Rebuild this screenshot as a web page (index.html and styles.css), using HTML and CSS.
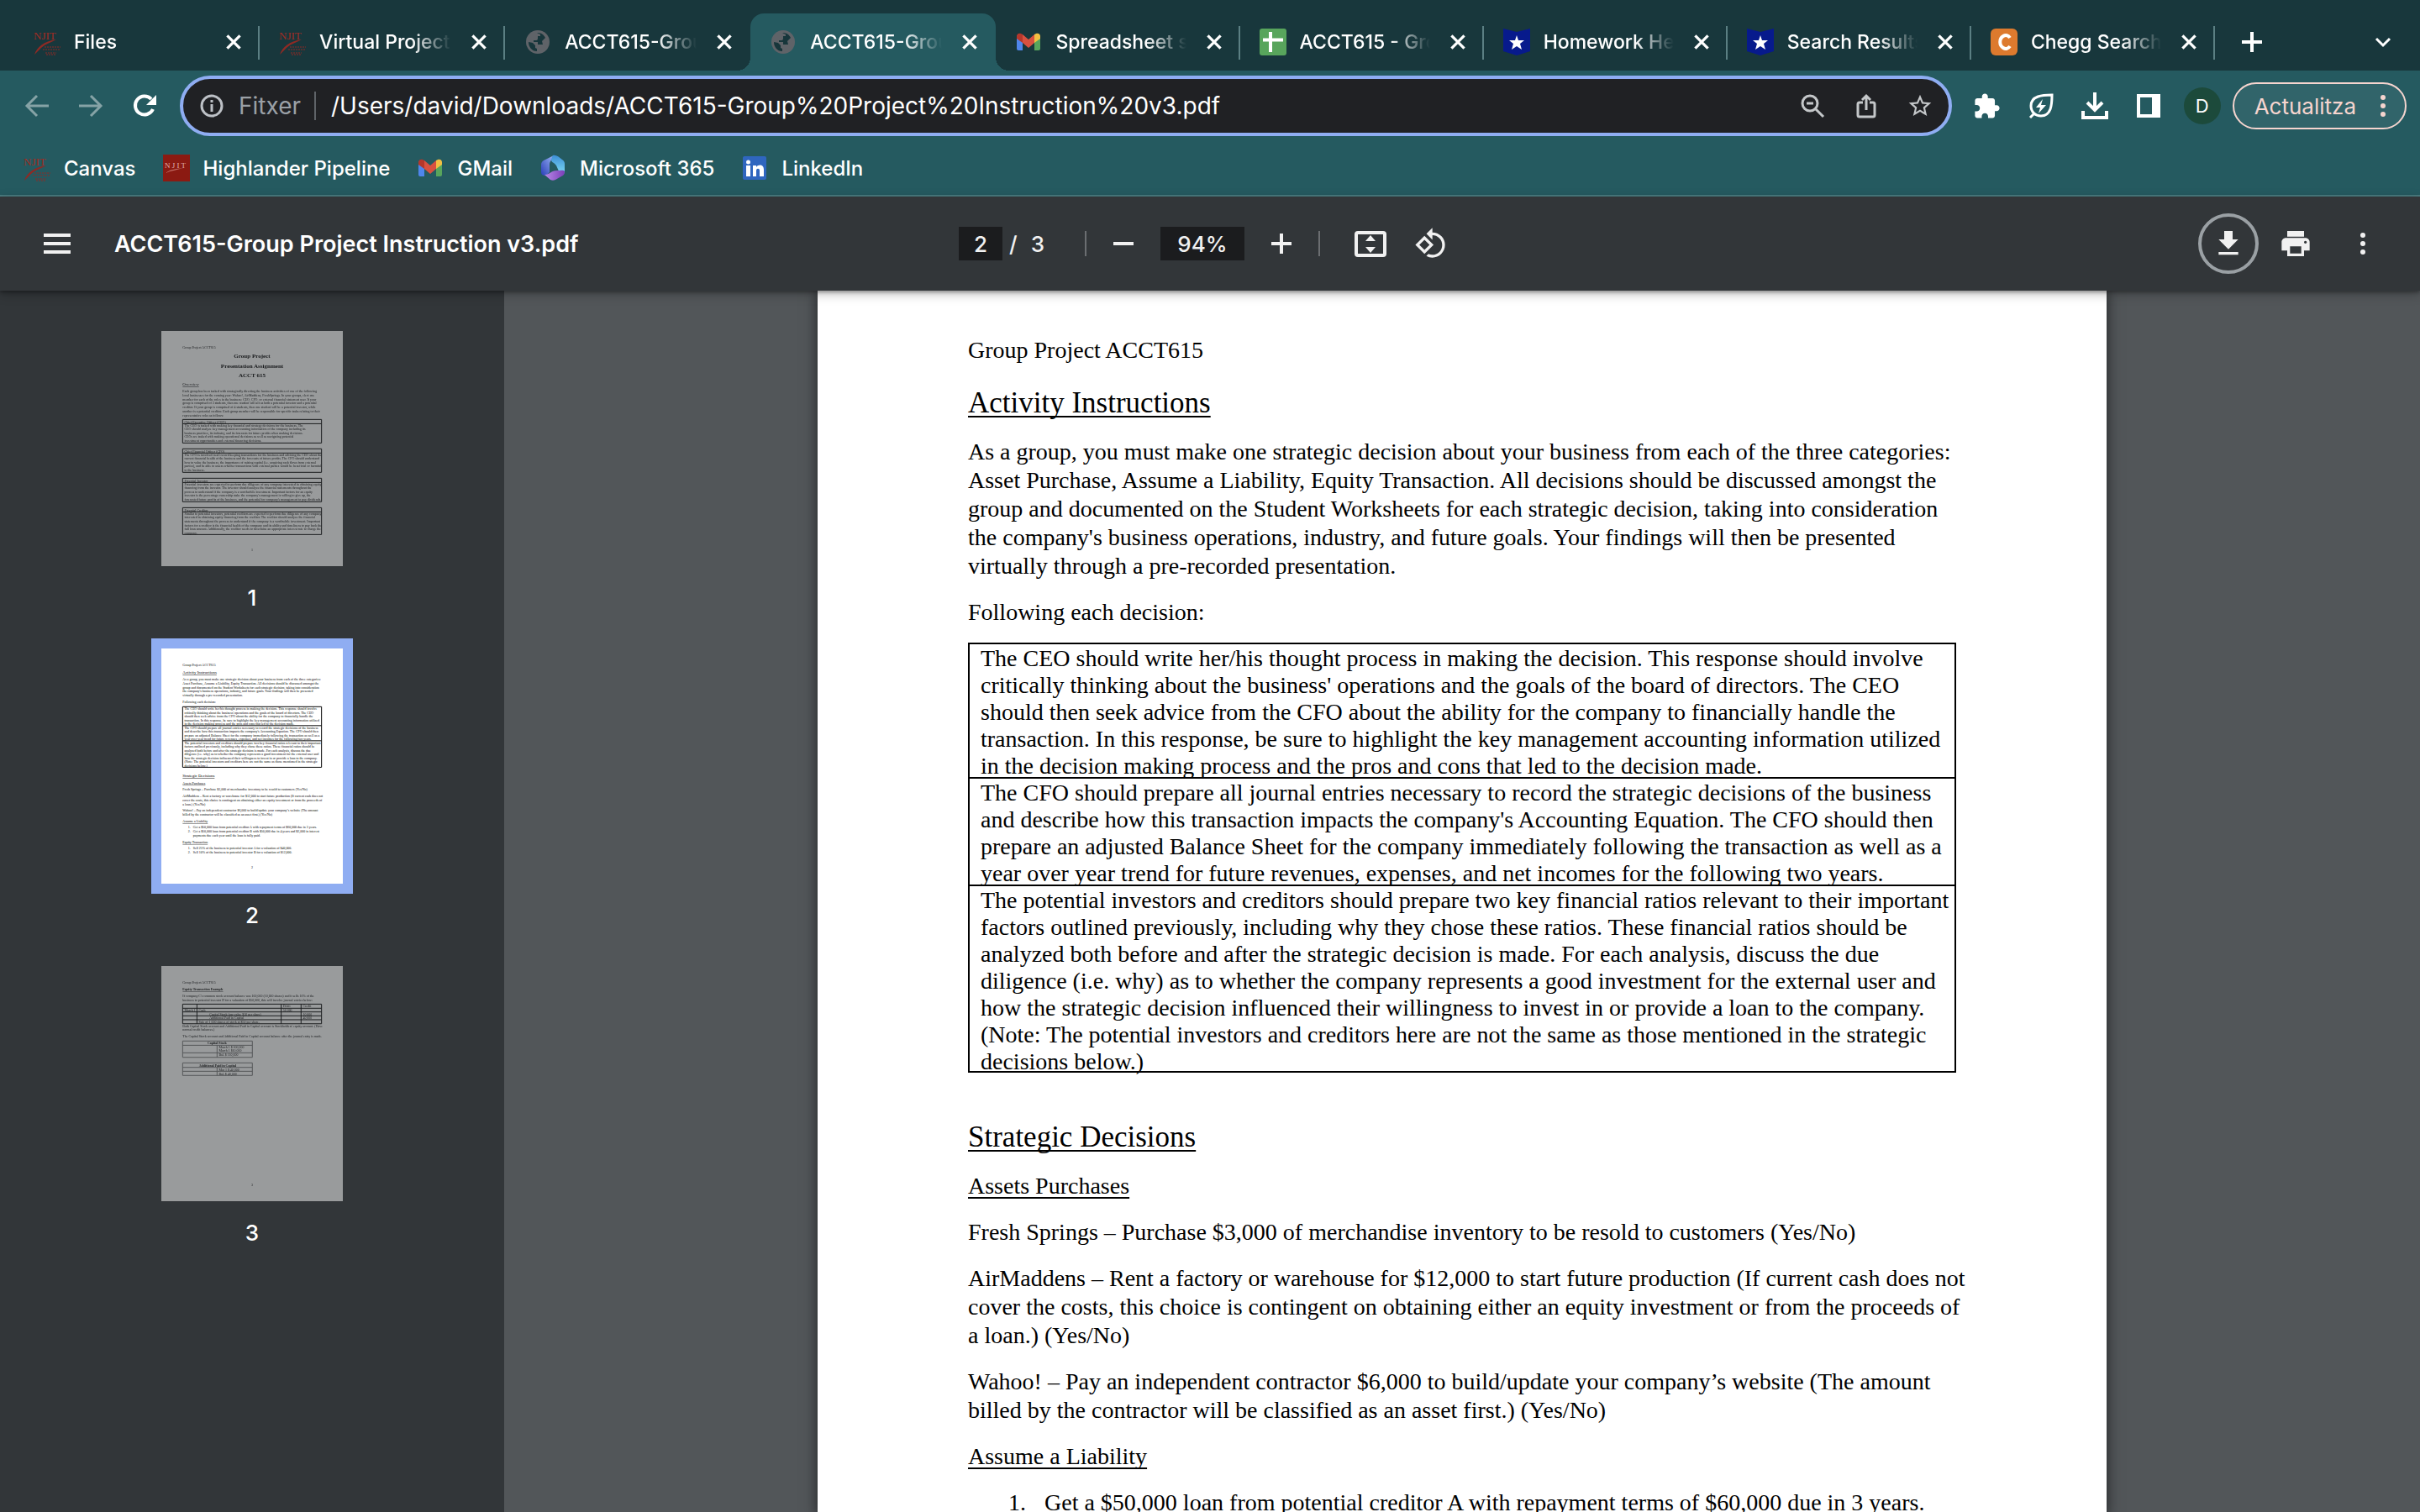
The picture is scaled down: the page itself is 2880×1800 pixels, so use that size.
FILE: index.html
```html
<!DOCTYPE html>
<html lang="ca">
<head>
    <meta charset="UTF-8">
    <meta name="viewport" content="width=device-width, initial-scale=1.0">
    <title>ACCT615-Group Project Instruction v3.pdf</title>
    <link rel="stylesheet" href="styles.css">
</head>
<body>
    <!-- Shared icons -->
    <svg class="sprite" width="0" height="0" aria-hidden="true">
        <defs>
            <linearGradient id="ringBlue" x1="0" y1="1" x2="1" y2="0">
                <stop offset="0" stop-color="#2b3fb8"/>
                <stop offset="1" stop-color="#9bb6f5"/>
            </linearGradient>
            <linearGradient id="ringCyan" x1="0" y1="0" x2="0" y2="1">
                <stop offset="0" stop-color="#3d8fd6"/>
                <stop offset="1" stop-color="#7fdcf5"/>
            </linearGradient>
            <linearGradient id="ringPurple" x1="0" y1="0" x2="1" y2="0">
                <stop offset="0" stop-color="#b98ae8"/>
                <stop offset="1" stop-color="#7b3fb8"/>
            </linearGradient>
        </defs>
        <symbol id="close" viewBox="0 0 24 24"><path d="M5 5l14 14M19 5L5 19" stroke="currentColor" stroke-width="3" fill="none"/></symbol>
        <symbol id="swoosh" viewBox="0 0 32 32">
            <path d="M1 31C4 22 12 15 27 13C20 17 12 19 7 25Z" fill="#8f2a24"/>
            <path d="M13 22h19M11 25h21M14 29h13M15 31h12" stroke="#8f2a24" stroke-width="1" stroke-dasharray="2 1"/>
        </symbol>
        <symbol id="globe" viewBox="0 0 32 32">
            <circle cx="16" cy="16" r="14" fill="#5f6368"/>
            <path d="M5 16l5 1 3 3v3l2 1v3C9 27 5 22 5 16zM15 5c5 0 8 2 10 6l-4 4 1 4h-6v-3h-5v-2h3c2 0 2-2 2-3v-2h3V7z" fill="#17363b"/>
        </symbol>
        <symbol id="gmail" viewBox="0 0 32 32">
            <path d="M2 8v16a2 2 0 0 0 2 2h5V13z" fill="#4f86ec"/>
            <path d="M30 8v16a2 2 0 0 1-2 2h-5V13z" fill="#58a55c"/>
            <path d="M9 7l7 6 7-6v10l-7 6-7-6z" fill="#d85140"/>
            <path d="M2 9c0-3 3-4 5-3l2 1v10l-7-5z" fill="#b5372b"/>
            <path d="M30 9c0-3-3-4-5-3l-2 1v10l7-5z" fill="#f2bf42"/>
        </symbol>
        <symbol id="star-badge" viewBox="0 0 32 32">
            <path d="M0 0l16 4L32 0v27l-16 5L0 27z" fill="#071a8c"/>
            <path d="M16 8l2 6h7l-5 4 2 7-6-4-6 4 2-7-5-4h7z" fill="#fff"/>
        </symbol>
        <symbol id="dots" viewBox="0 0 40 40"><circle cx="20" cy="10" r="3"/><circle cx="20" cy="20" r="3"/><circle cx="20" cy="30" r="3"/></symbol>
    </svg>

    <div class="tab-strip">
        <div class="tabs" role="tablist">
            <div class="tab" role="tab">
                <svg class="favicon njit" viewBox="0 0 32 32"><text x="0" y="13">NJIT</text><use href="#swoosh"/></svg>
                <span class="tab-title">Files</span>
                <button class="tab-close" aria-label="Close"><svg><use href="#close"/></svg></button>
            </div>
            <div class="tab" role="tab">
                <svg class="favicon njit" viewBox="0 0 32 32"><text x="0" y="13">NJIT</text><use href="#swoosh"/></svg>
                <span class="tab-title">Virtual Project</span>
                <button class="tab-close" aria-label="Close"><svg><use href="#close"/></svg></button>
            </div>
            <div class="tab before-active" role="tab">
                <svg class="favicon"><use href="#globe"/></svg>
                <span class="tab-title">ACCT615-Group</span>
                <button class="tab-close" aria-label="Close"><svg><use href="#close"/></svg></button>
            </div>
            <div class="tab active" role="tab" aria-selected="true">
                <svg class="favicon"><use href="#globe"/></svg>
                <span class="tab-title">ACCT615-Group</span>
                <button class="tab-close" aria-label="Close"><svg><use href="#close"/></svg></button>
            </div>
            <div class="tab" role="tab">
                <svg class="favicon"><use href="#gmail"/></svg>
                <span class="tab-title">Spreadsheet s</span>
                <button class="tab-close" aria-label="Close"><svg><use href="#close"/></svg></button>
            </div>
            <div class="tab" role="tab">
                <svg class="favicon" viewBox="0 0 32 32"><rect width="32" height="32" rx="3" fill="#58a55c"/><path d="M4 13.500h24M13 4v24" stroke="#fff" stroke-width="4"/></svg>
                <span class="tab-title">ACCT615 - Gro</span>
                <button class="tab-close" aria-label="Close"><svg><use href="#close"/></svg></button>
            </div>
            <div class="tab" role="tab">
                <svg class="favicon"><use href="#star-badge"/></svg>
                <span class="tab-title">Homework Help</span>
                <button class="tab-close" aria-label="Close"><svg><use href="#close"/></svg></button>
            </div>
            <div class="tab" role="tab">
                <svg class="favicon"><use href="#star-badge"/></svg>
                <span class="tab-title">Search Results</span>
                <button class="tab-close" aria-label="Close"><svg><use href="#close"/></svg></button>
            </div>
            <div class="tab" role="tab">
                <svg class="favicon" viewBox="0 0 32 32"><rect width="32" height="32" rx="6" fill="#dd7a2e"/><path d="M23 11c-2-3-5-4-8-2-5 3-5 11 0 14 3 2 6 1 8-2" stroke="#fff" stroke-width="4" fill="none"/></svg>
                <span class="tab-title">Chegg Search</span>
                <button class="tab-close" aria-label="Close"><svg><use href="#close"/></svg></button>
            </div>
        </div>
        <div class="tab-actions">
            <button aria-label="New tab"><svg viewBox="0 0 32 32"><path d="M16 4v24M4 16h24" stroke="currentColor" stroke-width="4"/></svg></button>
            <button aria-label="Search tabs"><svg viewBox="0 0 32 32"><path d="M8 12l8 8 8-8" stroke="currentColor" stroke-width="3" fill="none"/></svg></button>
        </div>
    </div>

    <div class="browser-bar">
        <div class="nav-buttons">
            <button class="dim" aria-label="Back"><svg viewBox="0 0 32 32"><path d="M30 16H5M16 4L4 16l12 12" stroke="currentColor" stroke-width="3" fill="none"/></svg></button>
            <button class="dim" aria-label="Forward"><svg viewBox="0 0 32 32"><path d="M2 16h25M16 4l12 12-12 12" stroke="currentColor" stroke-width="3" fill="none"/></svg></button>
            <button aria-label="Reload"><svg viewBox="0 0 32 32"><path d="M26 20a11 11 0 1 1-2-12" stroke="currentColor" stroke-width="4" fill="none"/><path d="M30 3v12H18z" fill="currentColor"/></svg></button>
        </div>
        <div class="omnibox">
            <svg class="info" viewBox="0 0 32 32"><circle cx="16" cy="16" r="12" stroke="currentColor" stroke-width="3" fill="none"/><path d="M16 14v9M16 9v3" stroke="currentColor" stroke-width="3"/></svg>
            <label for="url">Fitxer</label>
            <input type="text" id="url" value="/Users/david/Downloads/ACCT615-Group%20Project%20Instruction%20v3.pdf">
            <div class="omnibox-actions">
                <button aria-label="Zoom"><svg viewBox="0 0 32 32"><circle cx="13" cy="13" r="9" stroke="currentColor" stroke-width="3" fill="none"/><path d="M20 20l9 9M9 13h8" stroke="currentColor" stroke-width="3"/></svg></button>
                <button aria-label="Share"><svg viewBox="0 0 32 32"><path d="M12 12H8a2 2 0 0 0-2 2v13a2 2 0 0 0 2 2h16a2 2 0 0 0 2-2V14a2 2 0 0 0-2-2h-4M16 21V5M11 9l5-5 5 5" stroke="currentColor" stroke-width="3" fill="none"/></svg></button>
                <button aria-label="Bookmark"><svg viewBox="1 0 22 24"><path fill="currentColor" d="M22 9.240l-7.190-.620L12 2 9.190 8.630 2 9.240l5.460 4.730L5.820 21 12 17.270 18.180 21l-1.630-7.030L22 9.240zM12 15.400l-3.760 2.270 1-4.280-3.320-2.880 4.380-.380L12 6.100l1.710 4.040 4.380.380-3.320 2.880 1 4.280L12 15.400z"/></svg></button>
            </div>
        </div>
        <div class="extensions">
            <button aria-label="Extensions"><svg viewBox="1 0 23 23"><path fill="currentColor" d="M20.500 11H19V7c0-1.100-.900-2-2-2h-4V3.500C13 2.120 11.880 1 10.500 1S8 2.120 8 3.500V5H4c-1.100 0-1.990.900-1.990 2v3.800H3.500c1.490 0 2.700 1.210 2.700 2.700s-1.210 2.700-2.700 2.700H2V20c0 1.100.900 2 2 2h3.800v-1.500c0-1.490 1.210-2.700 2.700-2.700 1.490 0 2.700 1.210 2.700 2.700V22H17c1.100 0 2-.900 2-2v-4h1.500c1.380 0 2.500-1.120 2.500-2.500S21.880 11 20.500 11z"/></svg></button>
            <button aria-label="Energy saver"><svg viewBox="0 0 32 32"><path d="M29 3C18 3 4 4 4 16c0 7 5 12 12 12 12 0 13-13 13-25zM8 25l-5 5" stroke="currentColor" stroke-width="3" fill="none"/><path d="M18 8l-8 10h5l-2 7 9-10h-6z" fill="currentColor"/></svg></button>
            <button aria-label="Downloads"><svg viewBox="0 0 32 32"><path d="M16 0v20M7 12l9 9 9-9M2 22v8h28v-8" stroke="currentColor" stroke-width="4" fill="none"/></svg></button>
            <button aria-label="Side panel"><svg viewBox="0 0 32 32"><path fill="currentColor" d="M2 2h28v28H2zM6 6v20h14V6z" fill-rule="evenodd"/></svg></button>
        </div>
        <button class="avatar">D</button>
        <button class="update">Actualitza <svg viewBox="0 0 40 40"><use href="#dots"/></svg></button>
    </div>

    <nav class="bookmarks">
        <a href="#"><svg class="njit" viewBox="0 0 32 32"><text x="0" y="13">NJIT</text><use href="#swoosh"/></svg>Canvas</a>
        <a href="#"><svg viewBox="0 0 32 32"><rect width="32" height="32" fill="#8b1a12"/><text x="2" y="16" font-family="Liberation Serif, serif" font-size="9" fill="#e0b0aa">N J I T</text><path d="M3 22c5-4 12-5 22-6-8 2-15 3-22 6z" fill="#c7746c"/></svg>Highlander Pipeline</a>
        <a href="#"><svg><use href="#gmail"/></svg>GMail</a>
        <a href="#"><svg viewBox="0 0 32 32">
            <path d="M17 1L5 7c-2 1-3 3-3 5v9c0 4 4 5 8 2l2-2V12c0-5 4-6 5-11z" fill="url(#ringBlue)"/>
            <path d="M16 1c4-1 7 2 11 5 2 1 3 3 3 5v9c0 4-4 5-6 2l-4-9c-3-5-9-3-4-12z" fill="url(#ringCyan)"/>
            <path d="M6 24c6 0 8-5 15-5 3 0 8-1 9 1 0 3-1 5-4 6l-7 4c-2 1-4 1-6 0z" fill="url(#ringPurple)"/>
        </svg>Microsoft 365</a>
        <a href="#"><svg viewBox="0 0 32 32"><rect x="2" y="2" width="28" height="28" rx="2" fill="#2f66bf"/><circle cx="8.500" cy="9" r="2.500" fill="#fff"/><path d="M6 13h5v13H6zM14 13h4v2c3-4 9-3 9 3v8h-5v-7c0-3-4-3-4 0v7h-4z" fill="#fff"/></svg>LinkedIn</a>
    </nav>

    <header class="pdf-toolbar">
        <div class="pdf-left">
            <button aria-label="Menu"><svg class="menu-icon" viewBox="0 0 32 32"><path d="M0 6h32M0 16h32M0 26h32" stroke="currentColor" stroke-width="4"/></svg></button>
            <h1>ACCT615-Group Project Instruction v3.pdf</h1>
        </div>
        <div class="pdf-center">
            <input type="text" class="page-input" value="2" aria-label="Page">
            <span class="page-count"><span>/</span><span>3</span></span>
            <span class="divider"></span>
            <button aria-label="Zoom out"><svg viewBox="0 0 40 40"><path d="M8 20h24" stroke="currentColor" stroke-width="4"/></svg></button>
            <input type="text" class="zoom-input" value="94%" aria-label="Zoom">
            <button aria-label="Zoom in"><svg viewBox="0 0 40 40"><path d="M8 20h24M20 8v24" stroke="currentColor" stroke-width="4"/></svg></button>
            <span class="divider"></span>
            <button class="fit" aria-label="Fit to page"><svg viewBox="0 0 40 40"><rect x="3" y="7" width="34" height="27" rx="2" stroke="currentColor" stroke-width="4" fill="none"/><path d="M20 10l6 7H14zM20 31l6-7H14z" fill="currentColor"/></svg></button>
            <button class="rotate" aria-label="Rotate"><svg viewBox="0 0 24 24"><path fill="currentColor" d="M7.340 6.410L.860 12.900l6.490 6.480 6.490-6.480-6.500-6.490zM3.690 12.900l3.660-3.660L11 12.900l-3.660 3.660-3.650-3.660zm15.670-6.260C17.610 4.880 15.300 4 13 4V.760L8.760 5 13 9.240V6c1.790 0 3.580.680 4.950 2.050 2.730 2.730 2.730 7.170 0 9.900C16.580 19.320 14.790 20 13 20c-.970 0-1.940-.210-2.840-.610l-1.490 1.490C10.020 21.620 11.510 22 13 22c2.300 0 4.610-.880 6.360-2.640 3.520-3.510 3.520-9.210 0-12.720z"/></svg></button>
        </div>
        <div class="pdf-right">
            <button class="download" aria-label="Download"><svg viewBox="0 0 24 24"><path fill="currentColor" d="M19 9h-4V3H9v6H5l7 7 7-7zM5 18v2h14v-2z"/></svg></button>
            <button aria-label="Print"><svg viewBox="0 0 24 24"><path fill="currentColor" d="M19 8H5c-1.660 0-3 1.340-3 3v6h4v4h12v-4h4v-6c0-1.660-1.340-3-3-3zm-3 11H8v-5h8v5zm3-7c-.550 0-1-.450-1-1s.450-1 1-1 1 .450 1 1-.450 1-1 1zm-1-9H6v4h12V3z"/></svg></button>
            <button class="more" aria-label="More"><svg viewBox="0 0 40 40"><use href="#dots"/></svg></button>
        </div>
    </header>

    <div class="viewer">
        <aside class="sidebar">
            <figure class="thumb">
                <svg viewBox="0 0 1534 1988">
                    <text x="180" y="147">Group Project ACCT615</text>
                    <g class="title">
                        <text x="767" y="227">Group Project</text>
                        <text x="767" y="312">Presentation Assignment</text>
                        <text x="767" y="390">ACCT 615</text>
                    </g>
                    <text class="heading" x="180" y="462">Overview</text>
                    <text x="180" y="518">Each group has been tasked with strategically directing the business activities of one of the following</text>
                    <text x="180" y="552">local businesses for the coming year: Wahoo!, AirMaddens, FreshSprings. In your groups, elect one</text>
                    <text x="180" y="586">member for each of the roles in the business: CEO, CFO, or external financial statement user. If your</text>
                    <text x="180" y="620">group is comprised of 3 students, then one student will act as both a potential investor and a potential</text>
                    <text x="180" y="654">creditor. If your group is comprised of 4 students, then one student will be a potential investor, while</text>
                    <text x="180" y="688">another is a potential creditor. Each group member will be responsible for specific tasks relating to their</text>
                    <text x="180" y="722">representative roles as follows:</text>
                    <path class="rule" d="M180 748h1174v199H180zM180 784h1174M180 996h1174v199H180zM180 1032h1174M180 1245h1174v199H180zM180 1281h1174M180 1494h1174v227H180zM180 1530h1174"/>
                    <text x="195" y="779">Chief Executive Officer (CEO)</text>
                    <text x="195" y="809">The CEO is tasked with making key financial and strategy decisions for the business. The</text>
                    <text x="195" y="841">CEO should analyze key management accounting information of the company including its</text>
                    <text x="195" y="873">business practices, its industry, and its forecasts for future profits when making decisions.</text>
                    <text x="195" y="905">CEOs are tasked with making operational decisions as well as navigating potential</text>
                    <text x="195" y="937">investment opportunities and external financing decisions.</text>
                    <text x="195" y="1027">Chief Financial Officer (CFO)</text>
                    <text x="195" y="1057">The CFO is involved in all record keeping transactions for the business and advising the CEO about the</text>
                    <text x="195" y="1089">current financial health of the business and the forecasts of future profits. The CFO should understand</text>
                    <text x="195" y="1121">how to value the business, the importance of raising capital (i.e. acquiring cash flows from external</text>
                    <text x="195" y="1153">parties), and be able to assess whether transactions with external parties would be beneficial or harmful</text>
                    <text x="195" y="1185">to the business.</text>
                    <text x="195" y="1276">Potential Investor</text>
                    <text x="195" y="1306">Potential investors are expected to perform due diligence of any company interested in obtaining equity</text>
                    <text x="195" y="1338">financing from the investor. The investor should analyze the financial statements throughout the</text>
                    <text x="195" y="1370">process to understand if the company is a worthwhile investment. Important factors for an equity</text>
                    <text x="195" y="1402">investor is the percentage ownership stake the company's management is willing to give up, the</text>
                    <text x="195" y="1434">forecasted future profits of the business, and the potential for company's management to pay dividends.</text>
                    <text x="195" y="1525">Potential Creditor</text>
                    <text x="195" y="1555">Similar to potential investors, potential creditors are expected to perform due diligence of any company</text>
                    <text x="195" y="1587">interested in obtaining equity financing from the creditor. The creditor should analyze the financial</text>
                    <text x="195" y="1619">statements throughout the process to understand if the company is a worthwhile investment. Important</text>
                    <text x="195" y="1651">factors for a creditor is the financial health of the company and its ability and timeliness to pay back the</text>
                    <text x="195" y="1683">full loan amount. Additionally, the creditor needs to determine an appropriate interest rate to charge the</text>
                    <text x="195" y="1715">company.</text>
                    <text x="760" y="1858">1</text>
                </svg>
                <figcaption>1</figcaption>
            </figure>
            <figure class="thumb selected">
                <svg viewBox="0 0 1534 1988">
                    <text x="180" y="147">Group Project ACCT615</text>
                    <text class="heading" x="180" y="213">Activity Instructions</text>
                    <text x="180" y="270">As a group, you must make one strategic decision about your business from each of the three categories:</text>
                    <text x="180" y="304">Asset Purchase, Assume a Liability, Equity Transaction. All decisions should be discussed amongst the</text>
                    <text x="180" y="338">group and documented on the Student Worksheets for each strategic decision, taking into consideration</text>
                    <text x="180" y="372">the company's business operations, industry, and future goals. Your findings will then be presented</text>
                    <text x="180" y="406">virtually through a pre-recorded presentation.</text>
                    <text x="180" y="461">Following each decision:</text>
                    <path class="rule" d="M180 492h1174v512H180zM180 652h1174M180 780h1174"/>
                    <text x="195" y="520">The CEO should write her/his thought process in making the decision. This response should involve</text>
                    <text x="195" y="552">critically thinking about the business' operations and the goals of the board of directors. The CEO</text>
                    <text x="195" y="584">should then seek advice from the CFO about the ability for the company to financially handle the</text>
                    <text x="195" y="616">transaction. In this response, be sure to highlight the key management accounting information utilized</text>
                    <text x="195" y="648">in the decision making process and the pros and cons that led to the decision made.</text>
                    <text x="195" y="680">The CFO should prepare all journal entries necessary to record the strategic decisions of the business</text>
                    <text x="195" y="712">and describe how this transaction impacts the company's Accounting Equation. The CFO should then</text>
                    <text x="195" y="744">prepare an adjusted Balance Sheet for the company immediately following the transaction as well as a</text>
                    <text x="195" y="776">year over year trend for future revenues, expenses, and net incomes for the following two years.</text>
                    <text x="195" y="808">The potential investors and creditors should prepare two key financial ratios relevant to their important</text>
                    <text x="195" y="840">factors outlined previously, including why they chose these ratios. These financial ratios should be</text>
                    <text x="195" y="872">analyzed both before and after the strategic decision is made. For each analysis, discuss the due</text>
                    <text x="195" y="904">diligence (i.e. why) as to whether the company represents a good investment for the external user and</text>
                    <text x="195" y="936">how the strategic decision influenced their willingness to invest in or provide a loan to the company.</text>
                    <text x="195" y="968">(Note: The potential investors and creditors here are not the same as those mentioned in the strategic</text>
                    <text x="195" y="1000">decisions below.)</text>
                    <text class="heading" x="180" y="1088">Strategic Decisions</text>
                    <text class="underline" x="180" y="1148">Assets Purchases</text>
                    <text x="180" y="1202">Fresh Springs – Purchase $3,000 of merchandise inventory to be resold to customers (Yes/No)</text>
                    <text x="180" y="1257">AirMaddens – Rent a factory or warehouse for $12,000 to start future production (If current cash does not</text>
                    <text x="180" y="1291">cover the costs, this choice is contingent on obtaining either an equity investment or from the proceeds of</text>
                    <text x="180" y="1325">a loan.) (Yes/No)</text>
                    <text x="180" y="1379">Wahoo! – Pay an independent contractor $6,000 to build/update your company’s website (The amount</text>
                    <text x="180" y="1413">billed by the contractor will be classified as an asset first.) (Yes/No)</text>
                    <text class="underline" x="180" y="1470">Assume a Liability</text>
                    <text x="225" y="1520">1.</text><text x="268" y="1520">Get a $50,000 loan from potential creditor A with repayment terms of $60,000 due in 3 years.</text>
                    <text x="225" y="1554">2.</text><text x="268" y="1554">Get a $50,000 loan from potential creditor B with $50,000 due in 4 years and $2,000 in interest</text>
                    <text x="268" y="1588">payments due each year until the loan is fully paid.</text>
                    <text class="underline" x="180" y="1647">Equity Transaction</text>
                    <text x="225" y="1697">1.</text><text x="268" y="1697">Sell 25% of the business to potential investor A for a valuation of $40,000.</text>
                    <text x="225" y="1731">2.</text><text x="268" y="1731">Sell 10% of the business to potential investor B for a valuation of $12,000.</text>
                    <text x="760" y="1858">2</text>
                </svg>
                <figcaption>2</figcaption>
            </figure>
            <figure class="thumb">
                <svg viewBox="0 0 1534 1988">
                    <text x="180" y="147">Group Project ACCT615</text>
                    <text class="underline bold" x="180" y="206">Equity Transaction Example</text>
                    <text x="180" y="263">If company C's common stock account balance was 100,000 (10,000 shares) and it sells 10% of the</text>
                    <text x="180" y="297">business to potential investor D for a valuation of $50,000, this will involve journal entries below:</text>
                    <path class="rule" d="M180 322h1174v166H180zM180 357h1174M180 388h1174M180 421h1174M180 454h1174M301 322v166M1013 322v166M1181 322v166"/>
                    <text x="1028" y="350">Debit</text><text x="1196" y="350">Credit</text>
                    <text x="195" y="383">March 1</text><text x="316" y="383">Cash</text><text x="1028" y="383">50,000</text>
                    <text x="406" y="417">Capital Stock (par value $10 per share)</text><text x="1196" y="417">10,000</text>
                    <text x="406" y="449">Additional Paid in Capital</text><text x="1196" y="449">40,000</text>
                    <text x="316" y="483">Sale of 1,000 shares of stock at $50 per share.</text>
                    <text x="180" y="518">Both Capital Stock account and Additional Paid in Capital account is Stockholders' equity account. (Have</text>
                    <text x="180" y="548">normal credit balances.)</text>
                    <text x="180" y="604">The Capital Stock account and Additional Paid in Capital account balance after the journal entry is made.</text>
                    <path class="rule light" d="M180 634h589v138H180zM180 670h589M180 734h589M471 670v102M180 819h589v106H180zM180 857h589M180 890h589M471 857v68"/>
                    <text class="bold" x="390" y="662">Capital Stock</text>
                    <text x="486" y="696">March 1 $ 100,000</text>
                    <text x="486" y="726">March 1 $10,000</text>
                    <text x="486" y="762">Bal. $ 110,000</text>
                    <text class="bold" x="318" y="850">Additional Paid in Capital</text>
                    <text x="486" y="886">Mar 1 $ 40,000</text>
                    <text x="486" y="920">Bal. $ 40,000</text>
                    <text x="760" y="1858">3</text>
                </svg>
                <figcaption>3</figcaption>
            </figure>
        </aside>

        <main class="document">
            <article class="page">
                <p class="page-header">Group Project ACCT615</p>
                <h2>Activity Instructions</h2>
                <p>As a group, you must make one strategic decision about your business from each of the three categories:<br>
                Asset Purchase, Assume a Liability, Equity Transaction. All decisions should be discussed amongst the<br>
                group and documented on the Student Worksheets for each strategic decision, taking into consideration<br>
                the company's business operations, industry, and future goals. Your findings will then be presented<br>
                virtually through a pre-recorded presentation.</p>
                <p class="table-intro">Following each decision:</p>

                <table class="roles">
                    <tr><td><p>The CEO should write her/his thought process in making the decision. This response should involve<br>
                    critically thinking about the business' operations and the goals of the board of directors. The CEO<br>
                    should then seek advice from the CFO about the ability for the company to financially handle the<br>
                    transaction. In this response, be sure to highlight the key management accounting information utilized<br>
                    in the decision making process and the pros and cons that led to the decision made.</p></td></tr>
                    <tr><td><p>The CFO should prepare all journal entries necessary to record the strategic decisions of the business<br>
                    and describe how this transaction impacts the company's Accounting Equation. The CFO should then<br>
                    prepare an adjusted Balance Sheet for the company immediately following the transaction as well as a<br>
                    year over year trend for future revenues, expenses, and net incomes for the following two years.</p></td></tr>
                    <tr><td><p>The potential investors and creditors should prepare two key financial ratios relevant to their important<br>
                    factors outlined previously, including why they chose these ratios. These financial ratios should be<br>
                    analyzed both before and after the strategic decision is made. For each analysis, discuss the due<br>
                    diligence (i.e. why) as to whether the company represents a good investment for the external user and<br>
                    how the strategic decision influenced their willingness to invest in or provide a loan to the company.<br>
                    (Note: The potential investors and creditors here are not the same as those mentioned in the strategic<br>
                    decisions below.)</p></td></tr>
                </table>

                <h2 class="section">Strategic Decisions</h2>
                <h3>Assets Purchases</h3>
                <p>Fresh Springs – Purchase $3,000 of merchandise inventory to be resold to customers (Yes/No)</p>
                <p>AirMaddens – Rent a factory or warehouse for $12,000 to start future production (If current cash does not<br>
                cover the costs, this choice is contingent on obtaining either an equity investment or from the proceeds of<br>
                a loan.) (Yes/No)</p>
                <p>Wahoo! – Pay an independent contractor $6,000 to build/update your company’s website (The amount<br>
                billed by the contractor will be classified as an asset first.) (Yes/No)</p>
                <h3>Assume a Liability</h3>
                <ol>
                    <li>Get a $50,000 loan from potential creditor A with repayment terms of $60,000 due in 3 years.</li>
                </ol>
            </article>
        </main>
    </div>
</body>
</html>
```

FILE: styles.css
```css
:root {
    --tab-strip: #18373c;
    --chrome: #255a60;
    --chrome-border: #4a7c80;
    --omnibox: #202124;
    --focus-ring: #8fadf2;
    --pdf-toolbar: #323639;
    --pdf-background: #525659;
    --pdf-input: #1b1c1e;
    --icon: #f1f1f1;
}

* {
    margin: 0;
    padding: 0;
    box-sizing: border-box;
}

body {
    height: 100vh;
    display: flex;
    flex-direction: column;
    overflow: hidden;
    font-family: 'Inter', sans-serif;
    font-size: 24px;
    color: white;
    background-color: var(--pdf-background);
}

button {
    display: flex;
    align-items: center;
    justify-content: center;
    border: none;
    background: none;
    color: inherit;
    font: inherit;
    cursor: pointer;
}

input {
    border: none;
    outline: none;
    color: inherit;
    font: inherit;
}

svg {
    display: block;
    flex: none;
    width: 32px;
    height: 32px;
}

.sprite {
    position: absolute;
    width: 0;
    height: 0;
}

.njit {
    fill: #a02c24;
    font-family: 'Liberation Serif', serif;
    font-size: 13px;
    font-weight: normal;
}

/* Tabs */
.tab-strip {
    height: 84px;
    flex: none;
    display: flex;
    padding: 16px 16px 0 17px;
    background-color: var(--tab-strip);
}

.tabs {
    flex: 1;
    display: grid;
    grid-template-columns: repeat(4, minmax(0, 292fr)) repeat(5, minmax(0, 290fr));
}

.tab {
    position: relative;
    display: flex;
    align-items: center;
    padding: 0 18px 0 23px;
    font-size: 23px;
    font-weight: 500;
}

.tab::after {
    content: "";
    position: absolute;
    right: 0;
    top: 15px;
    width: 2px;
    height: 40px;
    background-color: #5b7f83;
}

.tab.before-active::after {
    display: none;
}

.tab.active {
    background-color: var(--chrome);
    border-radius: 16px 16px 0 0;
}

.tab.active::before,
.tab.active::after {
    content: "";
    position: absolute;
    top: auto;
    bottom: 0;
    width: 16px;
    height: 16px;
}

.tab.active::before {
    left: -16px;
    background: radial-gradient(circle at 0 0, transparent 16px, var(--chrome) 16px);
}

.tab.active::after {
    right: -16px;
    background: radial-gradient(circle at 100% 0, transparent 16px, var(--chrome) 16px);
}

.tab-title {
    flex: 1;
    margin: 0 20px 0 16px;
    overflow: hidden;
    white-space: nowrap;
    -webkit-mask-image: linear-gradient(to right, black 70%, transparent);
    mask-image: linear-gradient(to right, black 70%, transparent);
}

.tab-close svg {
    width: 26px;
    height: 26px;
}

.tab-actions {
    width: 228px;
    display: flex;
    align-items: center;
    justify-content: space-between;
    padding: 0 12px 0 28px;
}

/* Address bar */
.browser-bar {
    height: 84px;
    flex: none;
    display: flex;
    align-items: center;
    padding: 0 16px 0 28px;
    background-color: var(--chrome);
}

.nav-buttons,
.extensions {
    display: flex;
    gap: 32px;
    margin-right: 26px;
}

.dim {
    color: #86a3a6;
}

.omnibox {
    flex: 1;
    height: 72px;
    display: flex;
    align-items: center;
    margin-right: 26px;
    padding: 0 18px;
    border: 4px solid var(--focus-ring);
    border-radius: 36px;
    background-color: var(--omnibox);
    font-size: 28px;
}

.omnibox .info {
    color: #bdc1c6;
}

.omnibox label {
    margin-left: 16px;
    padding-right: 16px;
    border-right: 2px solid #5f6368;
    color: #9aa0a6;
}

.omnibox input {
    flex: 1;
    padding-left: 18px;
    background: none;
}

.omnibox-actions {
    display: flex;
    gap: 32px;
    color: #c4c7c9;
}

.avatar {
    width: 44px;
    height: 44px;
    margin-right: 14px;
    border-radius: 50%;
    background-color: #1c4a3b;
    font-size: 22px;
}

.update {
    height: 56px;
    padding: 0 6px 0 24px;
    border: 2px solid #f6d5cf;
    border-radius: 28px;
    background-color: #31646a;
    color: #f6d5cf;
    font-size: 26px;
}

.update svg {
    width: 40px;
    height: 40px;
    margin-left: 12px;
    fill: #f6d5cf;
}

/* Bookmarks */
.bookmarks {
    flex: none;
    display: flex;
    gap: 32px;
    padding: 16px 28px;
    border-bottom: 2px solid var(--chrome-border);
    background-color: var(--chrome);
    font-weight: 500;
}

.bookmarks a {
    display: flex;
    align-items: center;
    gap: 16px;
    height: 32px;
    color: white;
    text-decoration: none;
}

/* PDF toolbar */
.pdf-toolbar {
    position: relative;
    z-index: 1;
    height: 112px;
    flex: none;
    display: grid;
    grid-template-columns: 1fr auto 1fr;
    align-items: center;
    padding: 0 48px 0 52px;
    background-color: var(--pdf-toolbar);
    box-shadow: 0 2px 4px rgba(0,0,0,0.3), 0 4px 12px rgba(0,0,0,0.25);
    color: var(--icon);
    font-size: 26px;
}

.pdf-toolbar svg {
    width: 40px;
    height: 40px;
    fill: currentColor;
}

.pdf-toolbar .menu-icon {
    width: 32px;
    height: 32px;
}

.pdf-left,
.pdf-center,
.pdf-right {
    display: flex;
    align-items: center;
}

.pdf-left {
    gap: 52px;
}

.pdf-left h1 {
    font-size: 27px;
    font-weight: 600;
    white-space: nowrap;
    color: white;
}

.pdf-center {
    gap: 24px;
    padding-right: 20px;
    font-weight: 500;
}

.pdf-center input {
    height: 40px;
    background-color: var(--pdf-input);
    text-align: center;
}

.page-input {
    width: 52px;
}

.zoom-input {
    width: 100px;
}

.page-count {
    display: flex;
    gap: 16px;
    width: 66px;
    margin-left: -16px;
}

.divider {
    width: 2px;
    height: 30px;
    background-color: #6b6e71;
}

.fit {
    margin-left: 16px;
}

.rotate {
    margin-left: 8px;
}

.pdf-right {
    justify-content: flex-end;
    gap: 24px;
}

.download {
    width: 72px;
    height: 72px;
    border: 4px solid #9aa0a4;
    border-radius: 50%;
}

.more {
    margin-left: 16px;
}

/* Viewer */
.viewer {
    flex: 1;
    min-height: 0;
    display: flex;
}

.sidebar {
    width: 600px;
    flex: none;
    display: flex;
    flex-direction: column;
    align-items: center;
    gap: 48px;
    padding-top: 48px;
    background-color: var(--pdf-toolbar);
}

.thumb {
    width: 216px;
}

.thumb svg {
    width: 216px;
    height: 280px;
    background-color: white;
    opacity: 0.5;
    font-family: 'Liberation Serif', serif;
    font-size: 28px;
}

.thumb.selected svg {
    opacity: 1;
    outline: 12px solid var(--focus-ring);
}

.thumb figcaption {
    height: 50px;
    padding-top: 22px;
    font-size: 26px;
    font-weight: 500;
    line-height: 32px;
    text-align: center;
}

.thumb .title {
    font-size: 50px;
    font-weight: bold;
    text-anchor: middle;
}

.thumb .heading {
    font-size: 35px;
    text-decoration: underline;
}

.thumb .underline {
    text-decoration: underline;
}

.thumb .bold {
    font-weight: bold;
}

.thumb .rule {
    fill: none;
    stroke: black;
    stroke-width: 7;
}

.thumb .light {
    stroke: #777;
}

.document {
    flex: 1;
    min-width: 0;
    overflow: hidden;
}

.page {
    width: 100%;
    max-width: 1534px;
    min-height: 100%;
    margin: 0 auto;
    padding: 54px 179px 0;
    background-color: white;
    box-shadow: 0 0 16px rgba(0,0,0,0.6);
    color: black;
    font-family: 'Liberation Serif', serif;
    font-size: 28px;
    line-height: 34px;
    white-space: nowrap;
}

.page p,
.page h3 {
    margin-bottom: 21px;
}

.page .page-header {
    margin-bottom: 26px;
}

.page .table-intro {
    margin-bottom: 19px;
}

.page h2 {
    margin-bottom: 21px;
    font-size: 35px;
    font-weight: normal;
    line-height: 40px;
}

.page h3 {
    font-size: 28px;
    font-weight: normal;
}

.page h2,
.page h3 {
    text-decoration: underline 2px;
    text-decoration-skip-ink: none;
    text-underline-offset: 4px;
}

.page .section {
    margin-top: 57px;
}

.roles {
    width: 100%;
    border-spacing: 0;
    outline: 2px solid black;
    outline-offset: -2px;
    line-height: 32px;
}

.roles td {
    padding: 0 0 0 15px;
    box-shadow: inset 0 2px black;
}

/* text sits low in its row, down to the rule below */
.page .roles p {
    margin: 3px 0 -3px;
}

.page ol {
    padding-left: 48px;
    list-style: none;
    counter-reset: item;
}

.page li {
    display: flex;
    counter-increment: item;
}

.page li::before {
    content: counter(item) ".";
    width: 43px;
}
```
